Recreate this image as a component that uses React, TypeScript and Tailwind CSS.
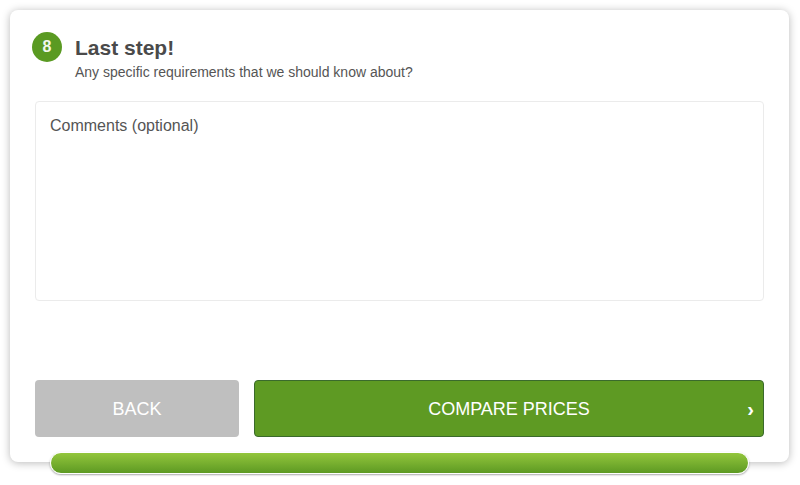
import { useState } from 'react'

export default function App() {
  const [comments, setComments] = useState('')

  return (
    <div className="w-[800px] h-[485px] bg-white p-[10px] font-['Liberation_Sans',Arial,sans-serif]">
      <div className="relative flex h-[452px] w-[779px] flex-col rounded-[8px] bg-white px-[25px] pb-[25px] shadow-[0_1px_8px_rgba(0,0,0,0.28)]">
        {/* Header */}
        <div className="-ml-[3px] flex items-start gap-[13px] pt-[22px]">
          <div className="flex h-[30px] w-[30px] shrink-0 items-center justify-center rounded-full bg-[#5a9a22] text-[16px] font-bold text-[#f2f7ec]">
            8
          </div>
          <div className="pt-[4px]">
            <h2 className="text-[21px] font-bold leading-[24px] text-[#4a4a4a]">Last step!</h2>
            <p className="mt-[4px] text-[14px] leading-[16px] text-[#555]">
              Any specific requirements that we should know about?
            </p>
          </div>
        </div>

        {/* Comments */}
        <textarea
          value={comments}
          onChange={(e) => setComments(e.target.value)}
          placeholder="Comments (optional)"
          className="mt-[21px] h-[200px] w-full resize-none rounded-[4px] border border-[#ebebeb] px-[14px] py-[14px] text-[16px] leading-[20px] text-[#444] outline-none placeholder:text-[#555]"
        />

        <div className="flex-1" />

        {/* Actions */}
        <div className="flex gap-[15px]">
          <button className="flex h-[57px] w-[204px] items-center justify-center rounded-[4px] bg-[#bfbfbf] pt-[2px] text-[18px] text-white">
            BACK
          </button>
          <button className="relative flex h-[57px] flex-1 items-center justify-center rounded-[4px] border border-[#3a6a2c] bg-[#5e9a23] pt-[2px] text-[18px] text-white">
            COMPARE PRICES
            <span className="absolute right-[9px] top-1/2 -translate-y-1/2 text-[20px] font-bold">›</span>
          </button>
        </div>

        {/* Progress */}
        <div className="absolute bottom-[-12px] left-[40px] h-[22px] w-[699px] rounded-full border border-white bg-gradient-to-b from-[#93c63c] to-[#5d9a23] shadow-[0_1px_2px_rgba(0,0,0,0.35)]" />
      </div>
    </div>
  )
}
